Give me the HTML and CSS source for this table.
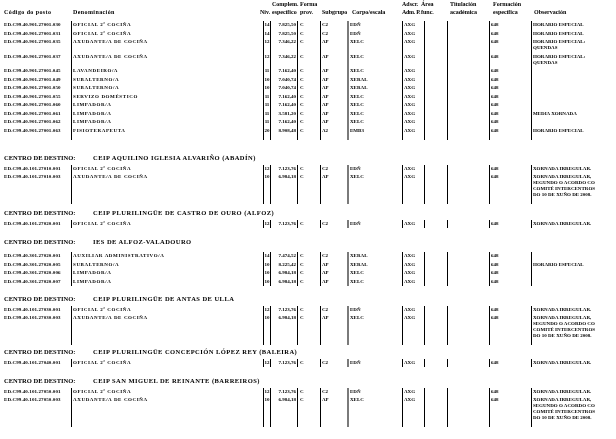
FILE: index.html
```html
<!DOCTYPE html>
<html lang="gl">
<head>
<meta charset="utf-8">
<title>Relación de postos</title>
<link rel="stylesheet" href="styles.css">
</head>
<body>
<div class="page">
  <div class="grid colhead">
    <div class="h-cod"><br>Código do posto</div>
    <div class="h-den"><br>Denominación</div>
    <div class="h-niv"><br>Niv.</div>
    <div class="h-com">Complem.<br>específico</div>
    <div class="h-for">Forma<br>prov.</div>
    <div class="h-sub"><br>Subgrupo</div>
    <div class="h-cor"><br>Corpo/escala</div>
    <div class="h-ads">Adscr.<br><span class="tight">Adm. P.</span></div>
    <div class="h-are">Área<br>func.</div>
    <div class="h-tit">Titulación<br>académica</div>
    <div class="h-fes">Formación<br>específica</div>
    <div class="h-obs"><br>Observación</div>
  </div>

  <section class="sec s1">
    <div class="grid row"><div class="cod">ED.C99.40.901.27001.030</div><div class="b den">OFICIAL 2ª COCIÑA</div><div class="b niv">14</div><div class="b com">7.825,50</div><div class="b for">C</div><div class="b sub">C2</div><div class="g cor">EDÑ</div><div class="b ads">AXG</div><div class="b"></div><div class="b"></div><div class="b fes">648</div><div class="o obs">HORARIO ESPECIAL</div></div>
    <div class="grid row"><div class="cod">ED.C99.40.901.27001.031</div><div class="b den">OFICIAL 2ª COCIÑA</div><div class="b niv">14</div><div class="b com">7.825,50</div><div class="b for">C</div><div class="b sub">C2</div><div class="g cor">EDÑ</div><div class="b ads">AXG</div><div class="b"></div><div class="b"></div><div class="b fes">648</div><div class="o obs">HORARIO ESPECIAL</div></div>
    <div class="grid row"><div class="cod">ED.C99.40.901.27001.035</div><div class="b den">AXUDANTE/A DE COCIÑA</div><div class="b niv">12</div><div class="b com">7.346,22</div><div class="b for">C</div><div class="b sub">AP</div><div class="g cor">XELC</div><div class="b ads">AXG</div><div class="b"></div><div class="b"></div><div class="b fes">648</div><div class="o obs">HORARIO ESPECIAL:<br>QUENDAS</div></div>
    <div class="grid row"><div class="cod">ED.C99.40.901.27001.037</div><div class="b den">AXUDANTE/A DE COCIÑA</div><div class="b niv">12</div><div class="b com">7.346,22</div><div class="b for">C</div><div class="b sub">AP</div><div class="g cor">XELC</div><div class="b ads">AXG</div><div class="b"></div><div class="b"></div><div class="b fes">648</div><div class="o obs">HORARIO ESPECIAL:<br>QUENDAS</div></div>
    <div class="grid row"><div class="cod">ED.C99.40.901.27001.045</div><div class="b den">LAVANDEIRO/A</div><div class="b niv">11</div><div class="b com">7.162,40</div><div class="b for">C</div><div class="b sub">AP</div><div class="g cor">XELC</div><div class="b ads">AXG</div><div class="b"></div><div class="b"></div><div class="b fes">648</div><div class="o obs"></div></div>
    <div class="grid row"><div class="cod">ED.C99.40.901.27001.049</div><div class="b den">SUBALTERNO/A</div><div class="b niv">10</div><div class="b com">7.040,74</div><div class="b for">C</div><div class="b sub">AP</div><div class="g cor">XERAL</div><div class="b ads">AXG</div><div class="b"></div><div class="b"></div><div class="b fes">648</div><div class="o obs"></div></div>
    <div class="grid row"><div class="cod">ED.C99.40.901.27001.050</div><div class="b den">SUBALTERNO/A</div><div class="b niv">10</div><div class="b com">7.040,74</div><div class="b for">C</div><div class="b sub">AP</div><div class="g cor">XERAL</div><div class="b ads">AXG</div><div class="b"></div><div class="b"></div><div class="b fes">648</div><div class="o obs"></div></div>
    <div class="grid row"><div class="cod">ED.C99.40.901.27001.055</div><div class="b den">SERVIZO DOMÉSTICO</div><div class="b niv">11</div><div class="b com">7.162,40</div><div class="b for">C</div><div class="b sub">AP</div><div class="g cor">XELC</div><div class="b ads">AXG</div><div class="b"></div><div class="b"></div><div class="b fes">648</div><div class="o obs"></div></div>
    <div class="grid row"><div class="cod">ED.C99.40.901.27001.060</div><div class="b den">LIMPADOR/A</div><div class="b niv">11</div><div class="b com">7.162,40</div><div class="b for">C</div><div class="b sub">AP</div><div class="g cor">XELC</div><div class="b ads">AXG</div><div class="b"></div><div class="b"></div><div class="b fes">648</div><div class="o obs"></div></div>
    <div class="grid row"><div class="cod">ED.C99.40.901.27001.061</div><div class="b den">LIMPADOR/A</div><div class="b niv">11</div><div class="b com">3.581,20</div><div class="b for">C</div><div class="b sub">AP</div><div class="g cor">XELC</div><div class="b ads">AXG</div><div class="b"></div><div class="b"></div><div class="b fes">648</div><div class="o obs">MEDIA XORNADA</div></div>
    <div class="grid row"><div class="cod">ED.C99.40.901.27001.062</div><div class="b den">LIMPADOR/A</div><div class="b niv">11</div><div class="b com">7.162,40</div><div class="b for">C</div><div class="b sub">AP</div><div class="g cor">XELC</div><div class="b ads">AXG</div><div class="b"></div><div class="b"></div><div class="b fes">648</div><div class="o obs"></div></div>
    <div class="grid row"><div class="cod">ED.C99.40.901.27001.063</div><div class="b den">FISIOTERAPEUTA</div><div class="b niv">20</div><div class="b com">8.908,48</div><div class="b for">C</div><div class="b sub">A2</div><div class="g cor">EMB3</div><div class="b ads">AXG</div><div class="b"></div><div class="b"></div><div class="b fes">648</div><div class="o obs">HORARIO ESPECIAL</div></div>
    <div class="grid row tail t5"><div></div><div class="b"></div><div class="b"></div><div class="b"></div><div class="b"></div><div class="b"></div><div class="g"></div><div class="b"></div><div class="b"></div><div class="b"></div><div class="b"></div><div class="o"></div></div>
  </section>

  <section class="sec">
    <h2 class="dest d2"><span class="lbl">CENTRO DE DESTINO:</span><span class="nm">CEIP AQUILINO IGLESIA ALVARIÑO (ABADÍN)</span></h2>
    <div class="grid row"><div class="cod">ED.C99.40.101.27010.001</div><div class="b den">OFICIAL 2ª COCIÑA</div><div class="b niv">12</div><div class="b com">7.123,76</div><div class="b for">C</div><div class="b sub">C2</div><div class="g cor">EDÑ</div><div class="b ads">AXG</div><div class="b"></div><div class="b"></div><div class="b fes">648</div><div class="o obs">XORNADA IRREGULAR.</div></div>
    <div class="grid row"><div class="cod">ED.C99.40.101.27010.003</div><div class="b den">AXUDANTE/A DE COCIÑA</div><div class="b niv">10</div><div class="b com">6.984,18</div><div class="b for">C</div><div class="b sub">AP</div><div class="g cor">XELC</div><div class="b ads">AXG</div><div class="b"></div><div class="b"></div><div class="b fes">648</div><div class="o obs">XORNADA IRREGULAR,<br>SEGUNDO O ACORDO CO<br>COMITÉ INTERCENTROS<br>DO 10 DE XUÑO DE 2008.</div></div>
    <div class="grid row tail t4"><div></div><div class="b"></div><div class="b"></div><div class="b"></div><div class="b"></div><div class="b"></div><div class="g"></div><div class="b"></div><div class="b"></div><div class="b"></div><div class="b"></div><div class="o"></div></div>
  </section>

  <section class="sec">
    <h2 class="dest d3"><span class="lbl">CENTRO DE DESTINO:</span><span class="nm">CEIP PLURILINGÜE DE CASTRO DE OURO (ALFOZ)</span></h2>
    <div class="grid row"><div class="cod">ED.C99.40.101.27020.001</div><div class="b den">OFICIAL 2ª COCIÑA</div><div class="b niv">12</div><div class="b com">7.123,76</div><div class="b for">C</div><div class="b sub">C2</div><div class="g cor">EDÑ</div><div class="b ads">AXG</div><div class="b"></div><div class="b"></div><div class="b fes">648</div><div class="o obs">XORNADA IRREGULAR.</div></div>
  </section>

  <section class="sec">
    <h2 class="dest d4"><span class="lbl">CENTRO DE DESTINO:</span><span class="nm">IES DE ALFOZ-VALADOURO</span></h2>
    <div class="grid row"><div class="cod">ED.C99.40.301.27020.001</div><div class="b den">AUXILIAR ADMINISTRATIVO/A</div><div class="b niv">14</div><div class="b com">7.474,52</div><div class="b for">C</div><div class="b sub">C2</div><div class="g cor">XERAL</div><div class="b ads">AXG</div><div class="b"></div><div class="b"></div><div class="b fes">648</div><div class="o obs"></div></div>
    <div class="grid row"><div class="cod">ED.C99.40.301.27020.005</div><div class="b den">SUBALTERNO/A</div><div class="b niv">10</div><div class="b com">8.225,42</div><div class="b for">C</div><div class="b sub">AP</div><div class="g cor">XERAL</div><div class="b ads">AXG</div><div class="b"></div><div class="b"></div><div class="b fes">648</div><div class="o obs">HORARIO ESPECIAL</div></div>
    <div class="grid row"><div class="cod">ED.C99.40.301.27020.006</div><div class="b den">LIMPADOR/A</div><div class="b niv">10</div><div class="b com">6.984,18</div><div class="b for">C</div><div class="b sub">AP</div><div class="g cor">XELC</div><div class="b ads">AXG</div><div class="b"></div><div class="b"></div><div class="b fes">648</div><div class="o obs"></div></div>
    <div class="grid row"><div class="cod">ED.C99.40.301.27020.007</div><div class="b den">LIMPADOR/A</div><div class="b niv">10</div><div class="b com">6.984,18</div><div class="b for">C</div><div class="b sub">AP</div><div class="g cor">XELC</div><div class="b ads">AXG</div><div class="b"></div><div class="b"></div><div class="b fes">648</div><div class="o obs"></div></div>
  </section>

  <section class="sec">
    <h2 class="dest d5"><span class="lbl">CENTRO DE DESTINO:</span><span class="nm">CEIP PLURILINGÜE DE ANTAS DE ULLA</span></h2>
    <div class="grid row"><div class="cod">ED.C99.40.101.27030.001</div><div class="b den">OFICIAL 2ª COCIÑA</div><div class="b niv">12</div><div class="b com">7.123,76</div><div class="b for">C</div><div class="b sub">C2</div><div class="g cor">EDÑ</div><div class="b ads">AXG</div><div class="b"></div><div class="b"></div><div class="b fes">648</div><div class="o obs">XORNADA IRREGULAR.</div></div>
    <div class="grid row"><div class="cod">ED.C99.40.101.27030.003</div><div class="b den">AXUDANTE/A DE COCIÑA</div><div class="b niv">10</div><div class="b com">6.984,18</div><div class="b for">C</div><div class="b sub">AP</div><div class="g cor">XELC</div><div class="b ads">AXG</div><div class="b"></div><div class="b"></div><div class="b fes">648</div><div class="o obs">XORNADA IRREGULAR,<br>SEGUNDO O ACORDO CO<br>COMITÉ INTERCENTROS<br>DO 10 DE XUÑO DE 2008.</div></div>
    <div class="grid row tail t4"><div></div><div class="b"></div><div class="b"></div><div class="b"></div><div class="b"></div><div class="b"></div><div class="g"></div><div class="b"></div><div class="b"></div><div class="b"></div><div class="b"></div><div class="o"></div></div>
  </section>

  <section class="sec">
    <h2 class="dest d6"><span class="lbl">CENTRO DE DESTINO:</span><span class="nm">CEIP PLURILINGÜE CONCEPCIÓN LÓPEZ REY (BALEIRA)</span></h2>
    <div class="grid row"><div class="cod">ED.C99.40.101.27040.001</div><div class="b den">OFICIAL 2ª COCIÑA</div><div class="b niv">12</div><div class="b com">7.123,76</div><div class="b for">C</div><div class="b sub">C2</div><div class="g cor">EDÑ</div><div class="b ads">AXG</div><div class="b"></div><div class="b"></div><div class="b fes">648</div><div class="o obs">XORNADA IRREGULAR.</div></div>
  </section>

  <section class="sec">
    <h2 class="dest d7"><span class="lbl">CENTRO DE DESTINO:</span><span class="nm">CEIP SAN MIGUEL DE REINANTE (BARREIROS)</span></h2>
    <div class="grid row"><div class="cod">ED.C99.40.101.27050.001</div><div class="b den">OFICIAL 2ª COCIÑA</div><div class="b niv">12</div><div class="b com">7.123,76</div><div class="b for">C</div><div class="b sub">C2</div><div class="g cor">EDÑ</div><div class="b ads">AXG</div><div class="b"></div><div class="b"></div><div class="b fes">648</div><div class="o obs">XORNADA IRREGULAR.</div></div>
    <div class="grid row"><div class="cod">ED.C99.40.101.27050.003</div><div class="b den">AXUDANTE/A DE COCIÑA</div><div class="b niv">10</div><div class="b com">6.984,18</div><div class="b for">C</div><div class="b sub">AP</div><div class="g cor">XELC</div><div class="b ads">AXG</div><div class="b"></div><div class="b"></div><div class="b fes">648</div><div class="o obs">XORNADA IRREGULAR,<br>SEGUNDO O ACORDO CO<br>COMITÉ INTERCENTROS<br>DO 10 DE XUÑO DE 2008.</div></div>
    <div class="grid row tail t4"><div></div><div class="b"></div><div class="b"></div><div class="b"></div><div class="b"></div><div class="b"></div><div class="g"></div><div class="b"></div><div class="b"></div><div class="b"></div><div class="b"></div><div class="o"></div></div>
  </section>
</div>
</body>
</html>
```

FILE: styles.css
```css
* { box-sizing: border-box; margin: 0; padding: 0; }
html, body { background: #fff; }
body {
  margin: 0;
  color: #000;
  font-family: "Liberation Serif", "Times New Roman", serif;
  font-weight: bold;
  -webkit-font-smoothing: antialiased;
}
.page {
  width: 616px;
  height: 439px;
  overflow: hidden;
  padding-left: 4px;
  will-change: transform;
}
.grid {
  display: grid;
  grid-template-columns: 67px 192px 7px 27px 23px 27px 55px 22px 23px 42px 42px 81px;
}

/* column headings */
.colhead {
  font-size: 6px;
  line-height: 8px;
  margin-bottom: 5px;
}
.colhead > div { white-space: nowrap; }
.h-cod { letter-spacing: 0.4px; }
.h-den { padding-left: 2px; letter-spacing: 0.4px; }
.h-niv { margin-left: -3px; }
.h-com { padding-left: 2px; }
.h-for { padding-left: 3px; }
.h-sub { padding-left: 2px; }
.h-cor { padding-left: 5px; }
.h-are { margin-left: -3px; }
.h-tit { padding-left: 3px; }
.h-fes { padding-left: 4px; }
.h-obs { padding-left: 3px; }
.tight { letter-spacing: -0.3px; }

/* data rows */
.row {
  font-size: 5px;
  line-height: 6px;
}
.row > div {
  padding: 1px 0 1.5px;
  white-space: nowrap;
}
.row.tail > div { padding: 0; }
.t5 > div { height: 5px; }
.t4 > div { height: 4px; }
.b { border-left: 1px solid #000; }
.g { border-left: 2px solid #7a7a7a; }
.o { border-left: 1.5px solid #000; }
.cod { letter-spacing: 0.1px; }
.den { padding-left: 1px !important; letter-spacing: 0.6px; }
.niv { text-align: center; }
.com { text-align: right; padding-right: 1px !important; }
.for { padding-left: 2px !important; }
.sub { padding-left: 1px !important; }
.cor { padding-left: 1px !important; }
.ads { padding-left: 1px !important; }
.fes { padding-left: 1px !important; }
.obs { padding-left: 1px !important; }

/* centre headings */
.dest {
  display: flex;
  font-size: 6.5px;
  line-height: 8px;
  font-weight: bold;
  margin: 10px 0 2.5px;
}
.dest .lbl { width: 89px; flex: none; }
.dest .nm { letter-spacing: 0.45px; }
.d2 { margin-top: 14px; }
.d3 { margin-top: 5.5px; }
.d4 { margin-top: 10px; margin-bottom: 6px; }
.d5 { margin-top: 9px; }
.d6 { margin-top: 3.5px; }
.d7 { margin-top: 10px; }
```
